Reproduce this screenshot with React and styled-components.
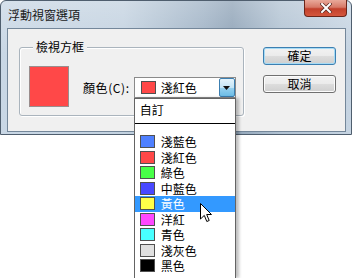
import React from "react";
import styled, {createGlobalStyle} from "styled-components";

const Global = createGlobalStyle`
  body {
    margin: 0;
    background: #ffffff;
    font-family: "Noto Sans CJK TC", "Liberation Sans", sans-serif;
    font-size: 12px;
    color: #000;
  }
`

const Page = styled.div`
  position: relative;
  width: 354px;
  height: 278px;
`

const Frame = styled.div`
  width: 352px;
  height: 135px;
  box-sizing: border-box;
  border: 1px solid #4f5e6e;
  border-radius: 6px 6px 0 0;
  padding: 0 5px 2px 6px;
  display: flex;
  flex-direction: column;
  background:
    linear-gradient(180deg, rgba(255,255,255,0.25) 0%, rgba(255,255,255,0) 40%),
    linear-gradient(90deg, #c9d7e5 0%, #c3d2e0 35%, #9fb2c5 58%, #8fa3b7 66%, #b2c3d3 80%, #c6d4e2 100%);
`

const TitleBar = styled.div`
  height: 27px;
  display: flex;
  align-items: flex-start;
  justify-content: space-between;
`

const Title = styled.span`
  margin: 7px 0 0 1px;
  font-size: 12px;
  line-height: 14px;
  color: #1a1a1a;
`

const CloseButton = styled.div`
  width: 43px;
  height: 17px;
  margin: -1px -1px 0 0;
  box-sizing: border-box;
  border: 1px solid #6b2519;
  border-top: none;
  border-radius: 0 0 4px 4px;
  background: linear-gradient(180deg, #e9a99a 0%, #d77967 45%, #c2402b 55%, #d4563c 100%);
  display: flex;
  align-items: center;
  justify-content: center;
`

const Client = styled.div`
  flex: 1;
  display: flex;
  align-items: flex-start;
  background: #f0f0f0;
  border: 1px solid #74879a;
`

const Group = styled.div`
  margin: 18px 0 0 11px;
  width: 225px;
  height: 69px;
  box-sizing: border-box;
  border: 1px solid #aab4bd;
  border-radius: 3px;
  box-shadow: inset 1px 1px 0 #fff, 1px 1px 0 #fff;
  display: flex;
  flex-direction: column;
  align-items: flex-start;
`

const Legend = styled.span`
  margin: -8px 0 0 13px;
  padding: 0 3px;
  background: #f0f0f0;
  font-size: 12px;
  line-height: 14px;
`

const GroupRow = styled.div`
  display: flex;
  align-items: center;
  padding: 12px 0 0 9px;
`

const Preview = styled.div`
  width: 40px;
  height: 41px;
  box-sizing: border-box;
  background: #ff4848;
  border: 1px solid #9a8d8d;
`

const FieldLabel = styled.span`
  margin: 2px 4px 0 14px;
  font-size: 12px;
  line-height: 14px;
  letter-spacing: 0.6px;
`

const Combo = styled.div`
  position: relative;
  width: 102px;
  height: 21px;
  margin-top: 2px;
  box-sizing: border-box;
  border: 1px solid #8a8a8a;
  background: #fff;
  display: flex;
  align-items: center;
`

const Swatch = styled.span`
  width: 15px;
  height: 13px;
  box-sizing: border-box;
  flex: none;
  border: 1px solid #505050;
  background: ${p => p.$color};
`

const ComboValue = styled.div`
  flex: 1;
  display: flex;
  align-items: center;
  gap: 5px;
  padding-left: 6px;
  font-size: 12px;
`

const ArrowButton = styled.div`
  width: 16px;
  height: 19px;
  box-sizing: border-box;
  border: 1px solid #3c7fb1;
  border-radius: 2px;
  background: linear-gradient(180deg, #e5f4fc 0%, #c4e5f6 50%, #98d1ef 51%, #6cbde6 100%);
  display: flex;
  align-items: center;
  justify-content: center;
`

const List = styled.div`
  position: absolute;
  top: 20px;
  left: -1px;
  width: 102px;
  box-sizing: border-box;
  border: 1px solid #646464;
  border-bottom: none;
  background: #fff;
  padding: 3px 0 4px;
  box-shadow: 3px 0 3px rgba(0,0,0,0.25);
  z-index: 2;
`

const CustomRow = styled.div`
  height: 16px;
  line-height: 16px;
  padding-left: 5px;
  font-size: 12px;
`

const Separator = styled.div`
  height: 1px;
  margin: 5px 0 10px;
  background: #000;
`

const Item = styled.div`
  height: 15.5px;
  display: flex;
  align-items: center;
  gap: 6px;
  padding-left: 5px;
  font-size: 12px;
  background: ${p => p.$active ? "#3399ff" : "transparent"};
  color: ${p => p.$active ? "#fff" : "#000"};
`

const Buttons = styled.div`
  display: flex;
  flex-direction: column;
  gap: 10px;
  margin: 18px 0 0 19px;
`

const Button = styled.div`
  width: 73px;
  height: 18px;
  box-sizing: border-box;
  border: 1px solid ${p => p.$default ? "#3c7fb1" : "#707070"};
  border-radius: 3px;
  background: linear-gradient(180deg, #f2f2f2 0%, #ebebeb 49%, #dddddd 50%, #cfcfcf 100%);
  box-shadow: ${p => p.$default ? "inset 0 0 0 1px #a6dbf5" : "inset 0 0 0 1px #fcfcfc"};
  display: flex;
  align-items: center;
  justify-content: center;
  font-size: 12px;
  line-height: 14px;
`

const Cursor = styled.svg`
  position: absolute;
  left: 200px;
  top: 203px;
  z-index: 3;
`

const colors = [
    {name: "淺藍色", color: "#4f80ff"},
    {name: "淺紅色", color: "#ff4848"},
    {name: "綠色", color: "#48ff48"},
    {name: "中藍色", color: "#4848ff"},
    {name: "黃色", color: "#ffff48"},
    {name: "洋紅", color: "#ff48ff"},
    {name: "青色", color: "#48ffff"},
    {name: "淺灰色", color: "#e0e0e0"},
    {name: "黑色", color: "#000000"},
]

export default function App() {
    return (
        <Page>
            <Global/>
            <Frame>
                <TitleBar>
                    <Title>浮動視窗選項</Title>
                    <CloseButton>
                        <svg width="12" height="10" viewBox="0 0 12 10">
                            <path d="M2 1 L10 9 M10 1 L2 9" stroke="#5a2a22" strokeWidth="3.4" strokeLinecap="square"/>
                            <path d="M2 1 L10 9 M10 1 L2 9" stroke="#fff" strokeWidth="2" strokeLinecap="square"/>
                        </svg>
                    </CloseButton>
                </TitleBar>
                <Client>
                    <Group>
                        <Legend>檢視方框</Legend>
                        <GroupRow>
                            <Preview/>
                            <FieldLabel>顏色(C):</FieldLabel>
                            <Combo>
                                <ComboValue>
                                    <Swatch $color="#ff4848"/>
                                    淺紅色
                                </ComboValue>
                                <ArrowButton>
                                    <svg width="7" height="4" viewBox="0 0 7 4">
                                        <path d="M0 0 H7 L3.5 4 Z" fill="#111"/>
                                    </svg>
                                </ArrowButton>
                                <List>
                                    <CustomRow>自訂</CustomRow>
                                    <Separator/>
                                    {colors.map(c => (
                                        <Item key={c.name} $active={c.name === "黃色"}>
                                            <Swatch $color={c.color}/>
                                            {c.name}
                                        </Item>
                                    ))}
                                </List>
                            </Combo>
                        </GroupRow>
                    </Group>
                    <Buttons>
                        <Button $default>確定</Button>
                        <Button>取消</Button>
                    </Buttons>
                </Client>
            </Frame>
            <Cursor width="13" height="20" viewBox="0 0 13 20">
                <path d="M0.5 0.5 L0.5 16 L4.3 12.4 L6.8 18.5 L9.2 17.5 L6.7 11.5 L11.5 11.5 Z" fill="#fff" stroke="#000" strokeWidth="1"/>
            </Cursor>
        </Page>
    )
}
